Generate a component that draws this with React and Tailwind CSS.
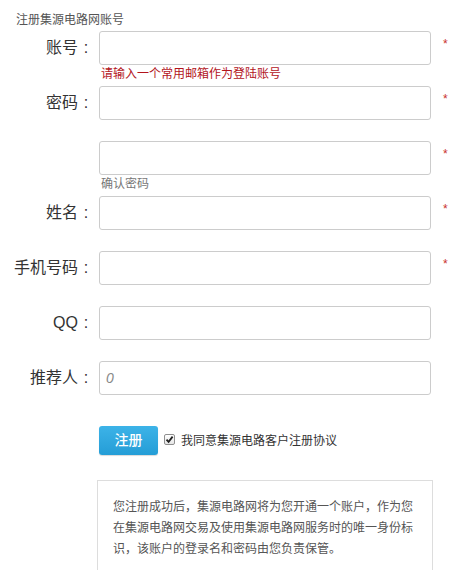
import React from 'react'

const font = { fontFamily: '"Liberation Sans", "Noto Sans CJK SC", sans-serif' }

function Field({ label, required, hint, hintTone, placeholder, type = 'text' }) {
  return (
    <div className="flex h-[55px] items-start">
      <div className="h-[34px] w-[94px] shrink-0 text-right text-[16px] leading-[34px] text-[#333]">
        {label ? (
          <>
            {label}
            <span className="inline-block w-[16px] text-center">:</span>
          </>
        ) : null}
      </div>
      <div className="ml-[5px] flex w-[332px] flex-col">
        <input
          type={type}
          placeholder={placeholder}
          className="h-[34px] w-full rounded-[3px] border border-[#ccc] bg-white px-[6px] text-[14px] text-[#555] outline-none placeholder:italic placeholder:text-[#888]"
        />
        {hint ? (
          <div
            className={`mt-[1px] pl-[2px] text-[12px] leading-[16px] ${
              hintTone === 'error' ? 'text-[#b3141c]' : 'text-[#777]'
            }`}
          >
            {hint}
          </div>
        ) : null}
      </div>
      {required ? (
        <span className="ml-[12px] mt-[5px] text-[12px] leading-[16px] text-[#c9302c]">*</span>
      ) : null}
    </div>
  )
}

export default function App() {
  return (
    <div className="min-h-[570px] w-[465px] overflow-hidden bg-white" style={font}>
      <div className="ml-[16px] mt-[12px] mb-[3px] text-[12px] leading-[16px] text-[#555]">
        注册集源电路网账号
      </div>

      <Field label="账号" required hint="请输入一个常用邮箱作为登陆账号" hintTone="error" />
      <Field label="密码" required type="password" />
      <Field label="" required type="password" hint="确认密码" />
      <Field label="姓名" required />
      <Field label="手机号码" required />
      <Field label="QQ" />
      <Field label="推荐人" placeholder="0" />

      {/* submit + agreement */}
      <div className="ml-[99px] mt-[10px] flex items-center">
        <button
          type="button"
          className="h-[29px] w-[59px] rounded-[3px] bg-gradient-to-b from-[#3cb3e8] to-[#249dd6] text-[14px] font-medium text-white shadow-[0_1px_1px_rgba(0,0,0,0.15)]"
        >
          注册
        </button>
        <label className="ml-[6px] flex items-center text-[12px] text-[#333]">
          <span className="mb-[2px] flex h-[11px] w-[11px] items-center justify-center rounded-[2px] border border-[#8f8f8f] bg-gradient-to-b from-white to-[#e6e6e6]">
            <svg width="9" height="9" viewBox="0 0 9 9">
              <path d="M1.5 4.6 L3.6 6.8 L7.6 1.6" fill="none" stroke="#222" strokeWidth="1.8" />
            </svg>
          </span>
          <span className="ml-[6px]">我同意集源电路客户注册协议</span>
        </label>
      </div>

      {/* notice */}
      <div className="ml-[97px] mt-[25px] w-[336px] border border-[#ddd] px-[15px] pb-[16px] pt-[16px] text-[12px] leading-[21px] text-[#555]">
        您注册成功后，集源电路网将为您开通一个账户，作为您在集源电路网交易及使用集源电路网服务时的唯一身份标识，该账户的登录名和密码由您负责保管。
      </div>
    </div>
  )
}
